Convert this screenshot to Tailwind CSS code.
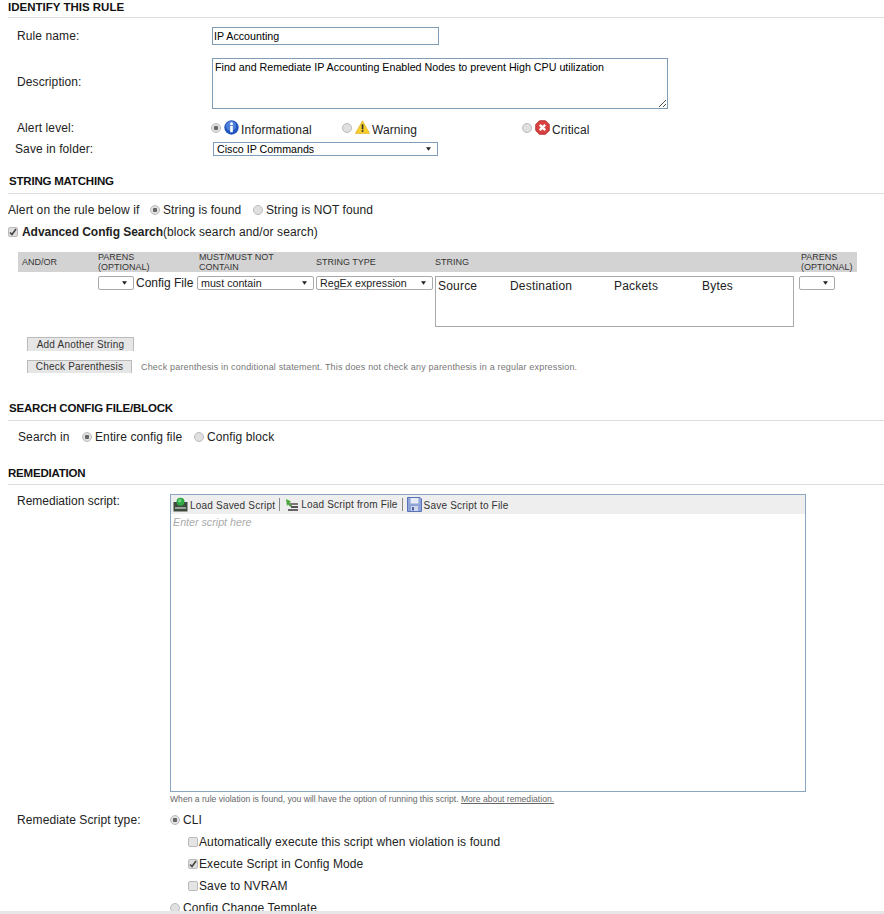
<!doctype html>
<html lang="en">
  <head>
    <meta charset="UTF-8" />
    <title>Rule</title>
    <script src="https://cdn.jsdelivr.net/npm/@tailwindcss/browser@4"></script>
  </head>
  <body class="relative h-[914px] w-[884px] overflow-hidden bg-white font-['Liberation_Sans',Arial,sans-serif] text-[12px] leading-[14px] text-[#222]">
    <!-- identify -->
    <h2 class="ml-2 border-b border-[#ddd] pb-[3px] text-[11.5px] font-bold text-[#111]">IDENTIFY THIS RULE</h2>
    <div class="mt-[9px] flex h-[18px] items-center">
      <label class="w-[212px] pl-[17px] tracking-[0.1px]">Rule name:</label>
      <input value="IP Accounting" class="h-[18px] w-[227px] border border-[#7f9db9] px-[1px] text-[10.7px] text-black" />
    </div>
    <div class="mt-[13px] flex h-[51px] items-center">
      <label class="w-[212px] pb-[4px] pl-[17px] tracking-[0.1px]">Description:</label>
      <div class="relative h-[51px] w-[456px] border border-[#7f9db9] px-[2px] py-[1px] text-[10.7px] text-black">
        Find and Remediate IP Accounting Enabled Nodes to prevent High CPU utilization
        <svg class="absolute bottom-[1px] right-[1px] h-[8px] w-[8px]" viewBox="0 0 8 8"><path d="M1 8 8 1M5 8 8 5" stroke="#555" stroke-width="1" fill="none" /></svg>
      </div>
    </div>
    <div class="mt-[11px] flex h-[16px] items-center tracking-[0.1px]">
      <label class="w-[211px] pl-[17px]">Alert level:</label>
      <div class="flex w-[131px] items-center">
        <input type="radio" checked class="size-[10px] appearance-none rounded-full border border-[#bbb] bg-[radial-gradient(circle,#666_0,#666_2px,#e0e0e0_2.5px)]" />
        <svg class="ml-[3px] size-[15px] -translate-y-[1px]" viewBox="0 0 15 15">
          <circle cx="7.5" cy="7.5" r="7.2" fill="#2356bd" />
          <circle cx="7" cy="6" r="5" fill="#4f80dc" />
          <rect x="6.2" y="6" width="2.6" height="6.2" fill="#fff" />
          <circle cx="7.5" cy="3.8" r="1.5" fill="#fff" />
        </svg>
        <span class="ml-[2px] translate-y-[2px]">Informational</span>
      </div>
      <div class="flex w-[180px] items-center">
        <input type="radio" class="size-[10px] appearance-none rounded-full border border-[#bbb] bg-[#e0e0e0]" />
        <svg class="ml-[3px] size-[15px] -translate-y-[1px]" viewBox="0 0 15 15">
          <path d="M7.5.8 14.6 13.4H.4Z" fill="#f6cf2d" stroke="#d9a514" stroke-width=".6" />
          <rect x="6.7" y="4.4" width="1.7" height="5" fill="#333" />
          <rect x="6.7" y="10.2" width="1.7" height="1.7" fill="#333" />
        </svg>
        <span class="ml-[2px] translate-y-[2px]">Warning</span>
      </div>
      <div class="flex items-center">
        <input type="radio" class="size-[10px] appearance-none rounded-full border border-[#bbb] bg-[#e0e0e0]" />
        <svg class="ml-[3px] size-[15px] -translate-y-[1px]" viewBox="0 0 15 15">
          <path d="M4.5.8h6l3.700 3.700v6l-3.700 3.700h-6L.8 10.500v-6Z" fill="#d8413f" stroke="#b53030" stroke-width="1" stroke-linejoin="round" />
          <path d="M4.8 4.8 10.2 10.2M10.2 4.8 4.8 10.2" stroke="#fff" stroke-width="2.4" />
        </svg>
        <span class="ml-[2px] translate-y-[2px]">Critical</span>
      </div>
    </div>
    <div class="mt-[6px] flex h-[14px] items-center tracking-[0.1px]">
      <label class="w-[213px] pl-[15px]">Save in folder:</label>
      <div class="relative h-[14px] w-[225px] border border-[#7f9db9] pl-[3px] text-[10.7px] leading-[12px] tracking-normal text-black">
        Cisco IP Commands
        <svg class="absolute right-[6px] top-[4px] h-[4px] w-[5px]" viewBox="0 0 7 5"><path d="M0 0h7L3.500 5Z" fill="#222" /></svg>
      </div>
    </div>

    <!-- string matching -->
    <h2 class="ml-2 mt-[18px] border-b border-[#ddd] pb-[5px] pl-[1px] text-[11.5px] font-bold tracking-[-0.2px] text-[#111]">STRING MATCHING</h2>
    <div class="mt-[9px] flex h-[14px] items-center pl-2 tracking-[0.1px]">
      <span class="w-[142px]">Alert on the rule below if</span>
      <input type="radio" checked class="size-[10px] appearance-none rounded-full border border-[#bbb] bg-[radial-gradient(circle,#666_0,#666_2px,#e0e0e0_2.5px)]" />
      <span class="ml-[3px] w-[90px]">String is found</span>
      <input type="radio" class="size-[10px] appearance-none rounded-full border border-[#bbb] bg-[#e0e0e0]" />
      <span class="ml-[3px]">String is NOT found</span>
    </div>
    <div class="mt-[8px] flex h-[14px] items-center pl-2 tracking-[0.1px]">
      <span class="flex size-[10px] items-center justify-center rounded-[2px] border border-[#bbb] bg-[#dedede]">
        <svg class="size-[8px]" viewBox="0 0 8 8"><path d="M1 4.500 3 6.500 7 1" stroke="#444" stroke-width="1.600" fill="none" /></svg>
      </span>
      <span class="ml-1 font-bold tracking-[-0.05px]">Advanced Config Search</span><span>(block search and/or search)</span>
    </div>

    <!-- string table -->
    <div class="ml-[18px] mt-[13px] w-[839px]">
      <div class="flex h-[20px] items-center bg-[#d3d3d3] text-[9px] leading-[10px] text-[#333]">
        <div class="w-[80px] pl-1">AND/OR</div>
        <div class="w-[101px]">PARENS<br />(OPTIONAL)</div>
        <div class="w-[117px]">MUST/MUST NOT<br />CONTAIN</div>
        <div class="w-[119px]">STRING TYPE</div>
        <div class="w-[366px]">STRING</div>
        <div>PARENS<br />(OPTIONAL)</div>
      </div>
      <div class="mt-1 flex h-[51px] items-start pl-[80px]">
        <div class="relative h-[14px] w-[36px] rounded-[2px] border border-[#aaa]">
          <svg class="absolute right-[6px] top-[4px] h-[4px] w-[5px]" viewBox="0 0 7 5"><path d="M0 0h7L3.500 5Z" fill="#222" /></svg>
        </div>
        <span class="ml-[2px] w-[61px]">Config File</span>
        <div class="relative h-[14px] w-[117px] rounded-[2px] border border-[#aaa] pl-[3px] text-[10.7px] leading-[12px]">
          must contain
          <svg class="absolute right-[6px] top-[4px] h-[4px] w-[5px]" viewBox="0 0 7 5"><path d="M0 0h7L3.500 5Z" fill="#222" /></svg>
        </div>
        <div class="relative ml-[2px] h-[14px] w-[117px] rounded-[2px] border border-[#aaa] pl-[3px] text-[10.7px] leading-[12px]">
          RegEx expression
          <svg class="absolute right-[6px] top-[4px] h-[4px] w-[5px]" viewBox="0 0 7 5"><path d="M0 0h7L3.500 5Z" fill="#222" /></svg>
        </div>
        <div class="ml-[2px] flex h-[51px] w-[359px] items-start border border-[#aaa] pl-[2px] pt-[2px] tracking-[0.2px]">
          <span class="w-[72px]">Source</span>
          <span class="w-[104px]">Destination</span>
          <span class="w-[88px]">Packets</span>
          <span>Bytes</span>
        </div>
        <div class="relative ml-[5px] h-[14px] w-[36px] rounded-[2px] border border-[#aaa]">
          <svg class="absolute right-[6px] top-[4px] h-[4px] w-[5px]" viewBox="0 0 7 5"><path d="M0 0h7L3.500 5Z" fill="#222" /></svg>
        </div>
      </div>
    </div>
    <button class="ml-[27px] mt-[10px] block h-[14px] w-[107px] border border-b-0 border-[#bbb] bg-[#e6e6e6] text-[10px] leading-[12px] tracking-[0.2px] text-[#333]">Add Another String</button>
    <div class="mt-[9px] flex h-[13px] items-center pl-[27px]">
      <button class="h-[13px] w-[105px] border border-b-0 border-[#bbb] bg-[#e6e6e6] text-[10px] leading-[12px] tracking-[0.2px] text-[#333]">Check Parenthesis</button>
      <span class="ml-[9px] text-[9px] tracking-[0.17px] text-[#777]">Check parenthesis in conditional statement. This does not check any parenthesis in a regular expression.</span>
    </div>

    <!-- search config -->
    <h2 class="ml-2 mt-[28px] border-b border-[#ddd] pb-[5px] pl-[1px] text-[11.5px] font-bold tracking-[-0.2px] text-[#111]">SEARCH CONFIG FILE/BLOCK</h2>
    <div class="mt-[9px] flex h-[14px] items-center pl-[18px] tracking-[0.1px]">
      <span class="w-[64px]">Search in</span>
      <input type="radio" checked class="size-[10px] appearance-none rounded-full border border-[#bbb] bg-[radial-gradient(circle,#666_0,#666_2px,#e0e0e0_2.5px)]" />
      <span class="ml-[3px] w-[99px]">Entire config file</span>
      <input type="radio" class="size-[10px] appearance-none rounded-full border border-[#bbb] bg-[#e0e0e0]" />
      <span class="ml-[3px]">Config block</span>
    </div>

    <!-- remediation -->
    <h2 class="ml-2 mt-[22px] border-b border-[#ddd] pb-[4px] text-[11.5px] font-bold tracking-[-0.2px] text-[#111]">REMEDIATION</h2>
    <div class="mt-[9px] flex items-start">
      <label class="w-[170px] pl-[17px]">Remediation script:</label>
      <div class="h-[298px] w-[636px] border border-[#8aa6c1]">
        <div class="flex h-[19px] items-center bg-[#eee] pl-[2px] text-[10px] tracking-[0.2px] text-[#333]">
          <svg class="size-[15px]" viewBox="0 0 15 15">
            <rect x="0.500" y="5" width="14" height="9.500" fill="#3f4a3f" />
            <rect x="2" y="10" width="11" height="2" fill="#9aa59a" />
            <circle cx="7.500" cy="4.800" r="4" fill="#2fa844" />
            <circle cx="6.800" cy="3.800" r="1.800" fill="#6ed47c" />
          </svg>
          <span class="ml-[2px] translate-y-[1px]">Load Saved Script</span>
          <span class="ml-[4px] h-[13px] w-px bg-[#888]"></span>
          <svg class="ml-[5px] size-[14px]" viewBox="0 0 14 14">
            <path d="M1 1 6 3.500 4.500 5 7 7.500 5.500 9 3 6.500 2 8Z" fill="#4aa83a" />
            <rect x="5" y="5" width="8" height="2" fill="#777" />
            <rect x="6" y="8" width="7" height="2" fill="#555" />
            <rect x="3" y="11" width="10" height="2" fill="#666" />
          </svg>
          <span class="ml-[2px]">Load Script from File</span>
          <span class="ml-[4px] h-[13px] w-px bg-[#888]"></span>
          <svg class="ml-[4px] size-[15px]" viewBox="0 0 15 15">
            <path d="M.5.5h12.500l1.500 1.500v12.500H.5Z" fill="#8ea4d8" stroke="#5a73b8" />
            <rect x="3.500" y="1" width="8" height="5.500" fill="#e6ebf7" />
            <rect x="4" y="9" width="7" height="5" fill="#cfd8ee" />
            <rect x="5" y="10" width="2" height="3.500" fill="#4a66a8" />
          </svg>
          <span class="ml-[2px] translate-y-[1px]">Save Script to File</span>
        </div>
        <div class="pl-[2px] pt-[1px] text-[10.7px] italic text-[#aaa]">Enter script here</div>
      </div>
    </div>
    <p class="ml-[170px] mt-[1px] h-[12px] text-[8.6px] leading-[12px] text-[#666]">When a rule violation is found, you will have the option of running this script. <a href="#" class="underline">More about remediation.</a></p>
    <div class="mt-[8px] flex h-[14px] items-center tracking-[0.1px]">
      <label class="w-[170px] pl-[17px]">Remediate Script type:</label>
      <input type="radio" checked class="size-[10px] appearance-none rounded-full border border-[#bbb] bg-[radial-gradient(circle,#666_0,#666_2px,#e0e0e0_2.5px)]" />
      <span class="ml-[3px]">CLI</span>
    </div>
    <div class="mt-[8px] flex h-[14px] items-center pl-[188px] tracking-[0.1px]">
      <span class="size-[10px] rounded-[2px] border border-[#bbb] bg-[#e4e4e4]"></span>
      <span class="ml-[1px]">Automatically execute this script when violation is found</span>
    </div>
    <div class="mt-[8px] flex h-[14px] items-center pl-[188px] tracking-[0.1px]">
      <span class="flex size-[10px] items-center justify-center rounded-[2px] border border-[#bbb] bg-[#dedede]">
        <svg class="size-[8px]" viewBox="0 0 8 8"><path d="M1 4.500 3 6.500 7 1" stroke="#444" stroke-width="1.600" fill="none" /></svg>
      </span>
      <span class="ml-[1px]">Execute Script in Config Mode</span>
    </div>
    <div class="mt-[8px] flex h-[14px] items-center pl-[188px] tracking-[0.1px]">
      <span class="size-[10px] rounded-[2px] border border-[#bbb] bg-[#e4e4e4]"></span>
      <span class="ml-[1px]">Save to NVRAM</span>
    </div>
    <div class="mt-[8px] flex h-[14px] items-center pl-[170px] tracking-[0.1px]">
      <input type="radio" class="size-[10px] appearance-none rounded-full border border-[#bbb] bg-[#e0e0e0]" />
      <span class="ml-[3px]">Config Change Template</span>
    </div>
    <div class="absolute inset-x-0 bottom-0 h-[3px] bg-[#e6e6e6]"></div>
  </body>
</html>
